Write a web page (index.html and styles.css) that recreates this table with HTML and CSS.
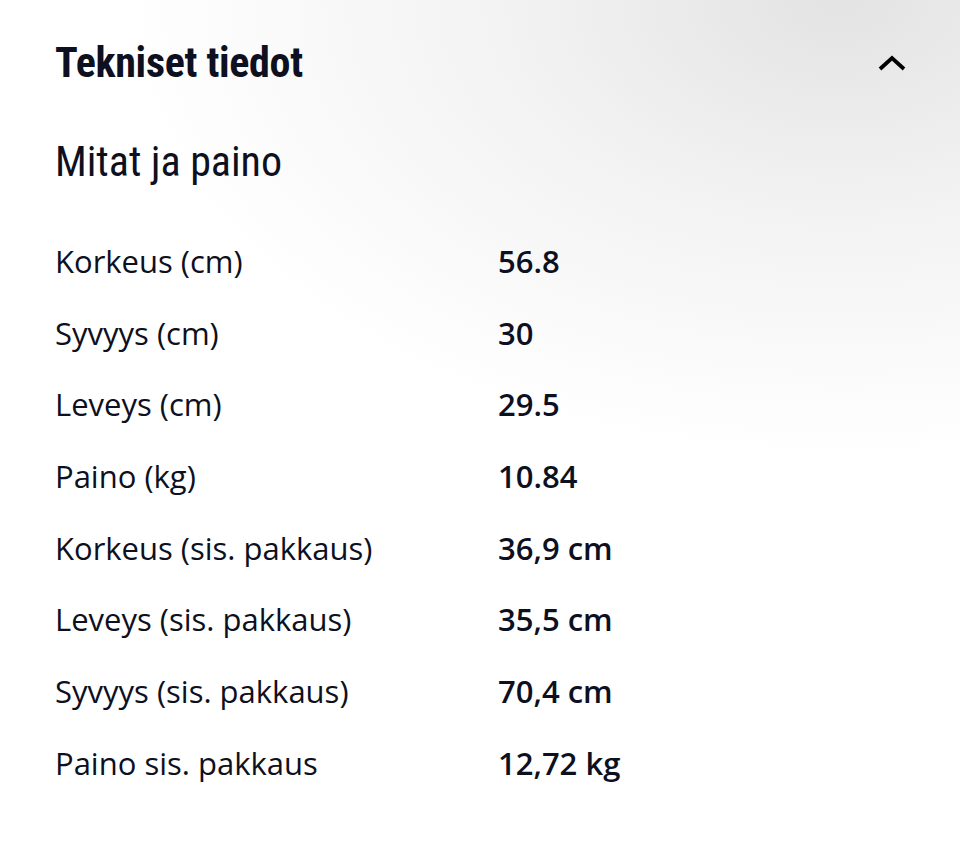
FILE: index.html
```html
<!DOCTYPE html>
<html lang="fi">
<head>
<meta charset="utf-8">
<link rel="stylesheet" href="styles.css">
</head>
<body>
<section class="specs">
  <header class="specs-head">
    <h2 class="specs-title">Tekniset tiedot</h2>
    <svg class="chevron" width="30" height="20" viewBox="0 0 30 20" aria-hidden="true"><path d="M3 15 L15 4 L27 15" fill="none" stroke="#000" stroke-width="3.8"/></svg>
  </header>
  <h3 class="specs-sub">Mitat ja paino</h3>
  <dl class="spec-list">
    <div class="spec-row"><dt>Korkeus (cm)</dt><dd>56.8</dd></div>
    <div class="spec-row"><dt>Syvyys (cm)</dt><dd>30</dd></div>
    <div class="spec-row"><dt>Leveys (cm)</dt><dd>29.5</dd></div>
    <div class="spec-row"><dt>Paino (kg)</dt><dd>10.84</dd></div>
    <div class="spec-row"><dt>Korkeus (sis. pakkaus)</dt><dd>36,9 cm</dd></div>
    <div class="spec-row"><dt>Leveys (sis. pakkaus)</dt><dd>35,5 cm</dd></div>
    <div class="spec-row"><dt>Syvyys (sis. pakkaus)</dt><dd>70,4 cm</dd></div>
    <div class="spec-row"><dt>Paino sis. pakkaus</dt><dd>12,72 kg</dd></div>
  </dl>
</section>
</body>
</html>
```
FILE: styles.css
```css
html, body {
  margin: 0;
  height: 100%;
}
body {
  background: radial-gradient(ellipse 720px 460px at 840px 0px, #e3e3e3 0%, #f2f2f2 45%, #ffffff 100%);
  color: #0d1020;
  font-family: "Open Sans", sans-serif;
}
.specs {
  padding: 36px 50px 0 55px;
}
.specs-head {
  display: flex;
  align-items: center;
  justify-content: space-between;
  height: 54px;
}
.specs-title {
  margin: 0;
  font-family: "Roboto", sans-serif;
  font-stretch: condensed;
  font-weight: 700;
  font-size: 42px;
  letter-spacing: -0.3px;
  line-height: 54px;
  color: #0d1020;
}
.chevron {
  margin: 2px 3px 0 0;
}
.specs-sub {
  margin: 45px 0 0;
  font-family: "Roboto", sans-serif;
  font-stretch: condensed;
  font-weight: 400;
  font-size: 42px;
  line-height: 54px;
}
.spec-list {
  margin: 53px 0 0;
}
.spec-row {
  display: grid;
  grid-template-columns: 443px 1fr;
  height: 71.7px;
  align-items: start;
}
.spec-row dt, .spec-row dd {
  margin: 0;
  font-size: 31px;
  line-height: 38px;
}
.spec-row dd {
  font-weight: 600;
}
```
